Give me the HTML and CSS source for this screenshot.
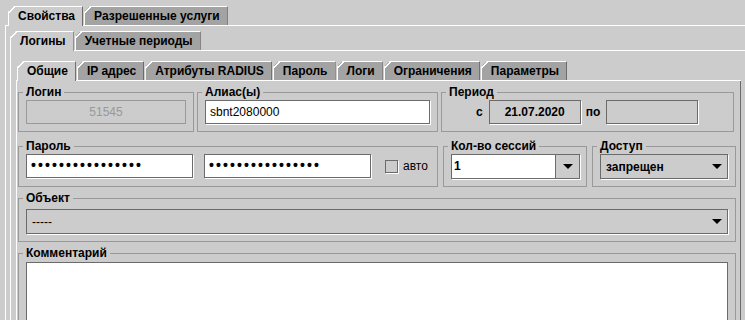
FILE: index.html
```html
<!DOCTYPE html>
<html lang="ru">
<head>
    <meta charset="UTF-8">
    <title>Логин 51545</title>
    <link rel="stylesheet" href="styles.css">
</head>
<body>

    <div class="wrap-outer">
        <div class="tabs tabs-outer">
            <div class="tab active">Свойства</div>
            <div class="tab">Разрешенные услуги</div>
        </div>
        <div class="panel panel-outer">
            <div class="tabs">
                <div class="tab active">Логины</div>
                <div class="tab">Учетные периоды</div>
            </div>
            <div class="panel panel-middle">
                <div class="wrap-inner">
                    <div class="tabs tabs-inner">
                        <div class="tab active">Общие</div>
                        <div class="tab">IP адрес</div>
                        <div class="tab">Атрибуты RADIUS</div>
                        <div class="tab">Пароль</div>
                        <div class="tab">Логи</div>
                        <div class="tab">Ограничения</div>
                        <div class="tab">Параметры</div>
                    </div>
                    <div class="panel panel-inner">

                        <div class="row row-first">
                            <fieldset class="group w-login">
                                <legend>Логин</legend>
                                <div class="field disabled">51545</div>
                            </fieldset>
                            <fieldset class="group w-alias">
                                <legend>Алиас(ы)</legend>
                                <div class="field white">sbnt2080000</div>
                            </fieldset>
                            <fieldset class="group w-period">
                                <legend>Период</legend>
                                <div class="period">
                                    <span class="caption cap-from">с</span>
                                    <div class="field date">21.07.2020</div>
                                    <span class="caption">по</span>
                                    <div class="field date"></div>
                                </div>
                            </fieldset>
                        </div>

                        <div class="row row-second">
                            <fieldset class="group w-pass">
                                <legend>Пароль</legend>
                                <div class="pass-line">
                                    <div class="field white dots">••••••••••••••••</div>
                                    <div class="field white dots">••••••••••••••••</div>
                                    <span class="check"></span>
                                    <span class="check-label">авто</span>
                                </div>
                            </fieldset>
                            <fieldset class="group w-sess">
                                <legend>Кол-во сессий</legend>
                                <div class="combo combo-edit">
                                    <div class="combo-text">1</div>
                                    <div class="combo-btn"><span class="arrow"></span></div>
                                </div>
                            </fieldset>
                            <fieldset class="group w-access">
                                <legend>Доступ</legend>
                                <div class="combo">
                                    <div class="combo-text bold">запрещен</div>
                                    <span class="arrow"></span>
                                </div>
                            </fieldset>
                        </div>

                        <div class="row row-third">
                            <fieldset class="group w-full">
                                <legend>Объект</legend>
                                <div class="combo combo-object">
                                    <div class="combo-text">-----</div>
                                    <span class="arrow"></span>
                                </div>
                            </fieldset>
                        </div>

                        <div class="row row-fourth">
                            <fieldset class="group w-full">
                                <legend>Комментарий</legend>
                                <div class="memo"></div>
                            </fieldset>
                        </div>

                    </div>
                </div>
            </div>
        </div>
    </div>

</body>
</html>
```

FILE: styles.css
```css
body {
    margin: 0;
    background-color: #cccccc;
    font-family: "Liberation Sans", Arial, sans-serif;
    font-size: 12px;
    color: #000;
    height: 320px;
    overflow: hidden;
}

/* вкладки */
.tabs {
    display: flex;
    align-items: flex-end;
    border-bottom: 1px solid #fff;
}

.tab {
    position: relative;
    box-sizing: border-box;
    height: 19px;
    line-height: 18px;
    padding: 0 7px 0 9px;
    margin-right: 1px;
    background-color: #a3a3a3;
    border-top: 1px solid #fff;
    border-left: 1px solid #fff;
    border-right: 1px solid #6b6b6b;
    font-weight: bold;
    white-space: nowrap;
    clip-path: polygon(6px 0, 100% 0, 100% 100%, 0 100%, 0 6px);
}

.tab::before {
    content: "";
    position: absolute;
    left: -1px;
    top: -1px;
    width: 8px;
    height: 8px;
    background: linear-gradient(to bottom right, transparent 40%, #fff 40%, #fff 54%, transparent 54%);
}

.tab.active {
    background-color: #cccccc;
    height: 20px;
    margin-bottom: -1px;
    z-index: 1;
}

.wrap-outer {
    margin-left: 5px;
}

.tabs-outer {
    padding: 6px 0 0 3px;
}

.panel {
    border-left: 1px solid #fff;
}

.panel-outer {
    padding: 5px 0 0 4px;
}

.panel-middle {
    padding: 10px 0 0 5px;
}

.wrap-inner {
    width: 725px;
}

.tabs-inner {
    padding-left: 1px;
}

.panel-inner {
    border-right: 1px solid #6b6b6b;
    padding: 4px 4px 0 1px;
    height: 260px;
}

/* группы */
.row {
    display: flex;
}

.row-first { gap: 3px; }
.row-second { gap: 5px; margin-top: 7px; }
.row-third { margin-top: 4px; }
.row-fourth { margin-top: 4px; }

.group {
    box-sizing: border-box;
    margin: 0;
    min-width: 0;
    border: 1px solid #999;
    padding: 1px 7px 7px 7px;
}

.group legend {
    padding: 0 3px;
    margin-left: -3px;
    font-weight: bold;
    line-height: 14px;
}

.w-login { width: 176px; }
.w-alias { width: 241px; }
.w-period { width: 293px; }
.w-pass { width: 420px; }
.w-sess { width: 144px; }
.w-access { width: 144px; }
.w-full { width: 718px; }

/* поля */
.field {
    box-sizing: border-box;
    height: 24px;
    line-height: 22px;
    padding: 0 4px;
    border: 1px solid #6b6b6b;
    box-shadow: 1px 1px 0 #fff;
    white-space: nowrap;
    overflow: hidden;
}

.field.white {
    background-color: #fff;
}

.field.disabled {
    border-color: #999;
    box-shadow: none;
    color: #999;
    text-align: center;
}

.period {
    display: flex;
    align-items: center;
}

.caption {
    font-weight: bold;
    margin: 0 6px 0 5px;
}

.cap-from {
    margin-left: 27px;
}

.field.date {
    width: 92px;
    text-align: center;
    font-weight: bold;
}

.pass-line {
    display: flex;
    align-items: center;
}

.dots {
    width: 167px;
    margin-right: 11px;
    font-size: 14px;
    font-weight: bold;
    letter-spacing: 2.1px;
    line-height: 21px;
}

.check {
    box-sizing: border-box;
    width: 13px;
    height: 13px;
    margin-left: 3px;
    border: 1px solid #6b6b6b;
    box-shadow: 1px 1px 0 #fff;
}

.check-label {
    margin-left: 5px;
}

/* выпадающие списки */
.combo {
    box-sizing: border-box;
    display: flex;
    align-items: center;
    height: 25px;
    border: 1px solid #6b6b6b;
    box-shadow: 1px 1px 0 #fff;
    padding-right: 5px;
}

.combo-object {
    margin-top: 3px;
}

.combo-text {
    flex: 1;
    padding-left: 5px;
}

.combo-text.bold {
    font-weight: bold;
}

.combo-edit {
    width: 129px;
    padding-right: 0;
}

.combo-edit .combo-text {
    align-self: stretch;
    line-height: 23px;
    background-color: #fff;
    font-weight: bold;
    padding-left: 2px;
}

.combo-btn {
    display: flex;
    align-items: center;
    justify-content: center;
    align-self: stretch;
    width: 23px;
    border-left: 1px solid #6b6b6b;
}

.arrow {
    width: 0;
    height: 0;
    border-left: 5px solid transparent;
    border-right: 5px solid transparent;
    border-top: 5px solid #000;
}

.memo {
    height: 80px;
    background-color: #fff;
    border: 1px solid #6b6b6b;
    margin-top: 1px;
}
```
